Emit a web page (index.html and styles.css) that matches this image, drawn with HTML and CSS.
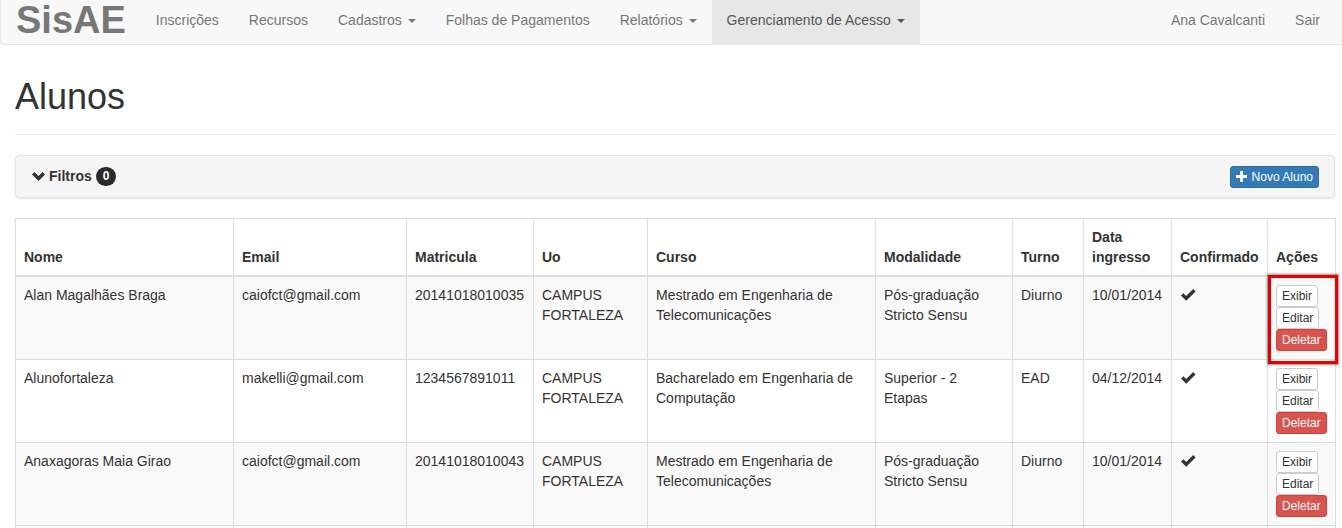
FILE: index.html
```html
<!doctype html>
<html lang="pt-BR">
<head>
  <meta charset="utf-8">
  <meta name="viewport" content="width=device-width,initial-scale=1">
  <title>SisAE - Alunos</title>
  <link rel="stylesheet" href="styles.css">
</head>
<body>
  <nav class="navbar">
    <a class="brand" href="#">SisAE</a>
    <ul class="nav">
      <li><a href="#">Inscrições</a></li>
      <li><a href="#">Recursos</a></li>
      <li><a href="#">Cadastros <span class="caret"></span></a></li>
      <li><a href="#">Folhas de Pagamentos</a></li>
      <li><a href="#">Relatórios <span class="caret"></span></a></li>
      <li class="active"><a href="#">Gerenciamento de Acesso <span class="caret"></span></a></li>
    </ul>
    <ul class="nav nav-right">
      <li><a href="#">Ana Cavalcanti</a></li>
      <li><a href="#">Sair</a></li>
    </ul>
  </nav>

  <div class="container">
    <div class="page-header">
      <h1>Alunos</h1>
    </div>

    <div class="filter-panel">
      <div class="filter-title">
        <svg class="chevron" width="13" height="9" viewBox="0 0 13 9"><polygon points="0,2.4 2.4,0 6.5,4.1 10.6,0 13,2.4 6.5,8.9" fill="#333"/></svg>
        Filtros <span class="badge">0</span>
      </div>
      <a class="btn btn-xs btn-primary" href="#">
        <svg class="plus" width="11" height="11" viewBox="0 0 11 11"><rect x="4" y="0" width="3" height="11" fill="#fff"/><rect x="0" y="4" width="11" height="3" fill="#fff"/></svg>
        Novo Aluno
      </a>
    </div>

    <table class="table">
      <colgroup>
        <col style="width:218px"><col style="width:173px"><col style="width:127px"><col style="width:114px"><col style="width:228px">
        <col style="width:137px"><col style="width:71px"><col style="width:88px"><col style="width:96px"><col style="width:68px">
      </colgroup>
      <thead>
        <tr>
          <th>Nome</th><th>Email</th><th>Matricula</th><th>Uo</th><th>Curso</th>
          <th>Modalidade</th><th>Turno</th><th>Data ingresso</th><th class="nowrap">Confirmado</th><th>Ações</th>
        </tr>
      </thead>
      <tbody>
        <tr>
          <td>Alan Magalhães Braga</td><td>caiofct@gmail.com</td><td>20141018010035</td><td>CAMPUS FORTALEZA</td>
          <td>Mestrado em Engenharia de Telecomunicações</td><td>Pós-graduação Stricto Sensu</td><td>Diurno</td><td>10/01/2014</td>
          <td><svg class="check" width="15" height="12" viewBox="0 0 15 12"><polygon points="0,6.6 2.4,4.2 5.2,7 12.2,0 14.6,2.4 5.2,11.8" fill="#333"/></svg></td>
          <td class="actions">
            <div class="btn-stack">
              <a class="btn btn-xs btn-default" href="#">Exibir</a>
              <a class="btn btn-xs btn-default" href="#">Editar</a>
              <a class="btn btn-xs btn-danger" href="#">Deletar</a>
            </div>
            <span class="mark"></span>
          </td>
        </tr>
        <tr>
          <td>Alunofortaleza</td><td>makelli@gmail.com</td><td>1234567891011</td><td>CAMPUS FORTALEZA</td>
          <td>Bacharelado em Engenharia de Computação</td><td>Superior - 2 Etapas</td><td>EAD</td><td>04/12/2014</td>
          <td><svg class="check" width="15" height="12" viewBox="0 0 15 12"><polygon points="0,6.6 2.4,4.2 5.2,7 12.2,0 14.6,2.4 5.2,11.8" fill="#333"/></svg></td>
          <td class="actions">
            <div class="btn-stack">
              <a class="btn btn-xs btn-default" href="#">Exibir</a>
              <a class="btn btn-xs btn-default" href="#">Editar</a>
              <a class="btn btn-xs btn-danger" href="#">Deletar</a>
            </div>
          </td>
        </tr>
        <tr>
          <td>Anaxagoras Maia Girao</td><td>caiofct@gmail.com</td><td>20141018010043</td><td>CAMPUS FORTALEZA</td>
          <td>Mestrado em Engenharia de Telecomunicações</td><td>Pós-graduação Stricto Sensu</td><td>Diurno</td><td>10/01/2014</td>
          <td><svg class="check" width="15" height="12" viewBox="0 0 15 12"><polygon points="0,6.6 2.4,4.2 5.2,7 12.2,0 14.6,2.4 5.2,11.8" fill="#333"/></svg></td>
          <td class="actions">
            <div class="btn-stack">
              <a class="btn btn-xs btn-default" href="#">Exibir</a>
              <a class="btn btn-xs btn-default" href="#">Editar</a>
              <a class="btn btn-xs btn-danger" href="#">Deletar</a>
            </div>
          </td>
        </tr>
        <tr class="next-row">
          <td></td><td></td><td></td><td></td><td></td><td></td><td></td><td></td><td></td><td></td>
        </tr>
      </tbody>
    </table>
  </div>
</body>
</html>
```

FILE: styles.css
```css
html,body{margin:0;padding:0}
body{height:528px;overflow:hidden;font-family:"Liberation Sans",Arial,Helvetica,sans-serif;font-size:14px;line-height:20px;color:#333;background:#fff}
a{text-decoration:none}

.navbar{display:flex;height:44px;background:#f8f8f8;border-left:1px solid #e7e7e7;border-bottom:1px solid #e7e7e7;border-bottom-left-radius:4px}
.brand{margin-left:15px;padding-right:15px;font-size:38px;font-weight:bold;line-height:40px;color:#777}
.nav{display:flex;list-style:none;margin:0;padding:0}
.nav a{display:block;padding:10px 15px 14px;color:#777}
.nav .active a{background:#e7e7e7;color:#555}
.nav-right{margin-left:auto;margin-right:7px}
.caret{display:inline-block;width:0;height:0;margin-left:2px;vertical-align:middle;border-top:4px solid;border-left:4px solid transparent;border-right:4px solid transparent}

.container{padding:0 7px 0 15px}
.page-header{margin-top:32px;padding-bottom:9px;border-bottom:1px solid #eee}
.page-header h1{margin:0 0 8px;font-size:36px;font-weight:normal;line-height:40px;color:#333}

.filter-panel{display:flex;align-items:center;justify-content:space-between;margin-top:20px;padding:10px 15px 9px 16px;background:#f5f5f5;border:1px solid #e3e3e3;border-radius:4px;box-shadow:0 1px 2px rgba(0,0,0,.12)}
.filter-title{display:flex;align-items:center;margin-top:-2px;font-weight:bold;color:#333}
.chevron{margin-right:4px}
.badge{display:inline-block;margin-left:4px;min-width:6px;padding:3px 7px 4px;font-size:12px;font-weight:bold;line-height:12px;color:#fff;text-align:center;background:#2b2b2b;border-radius:10px}

.btn{display:inline-block;border:1px solid transparent;text-align:center;white-space:nowrap}
.btn-xs{padding:1px 5px;font-size:12px;line-height:18px;border-radius:3px}
.btn-primary{color:#fff;background:#337ab7;border-color:#2e6da4}
.btn-default{color:#333;background:#fff;border-color:#ccc}
.btn-danger{color:#fff;background:#d9534f;border-color:#d43f3a}
.plus{vertical-align:-1px;margin-right:1px}

.table{width:100%;margin-top:20px;border-collapse:collapse;table-layout:fixed;border:1px solid #ddd}
.table th,.table td{padding:8px;border:1px solid #ddd;text-align:left;vertical-align:top}
.table th{vertical-align:bottom;border-bottom:2px solid #ddd;font-weight:bold}
.table .nowrap{white-space:nowrap}
.table tbody tr:nth-child(odd){background:#f9f9f9}
.table .next-row td{height:20px}
.check{vertical-align:-1px;margin-left:1px}

.actions{position:relative}
.btn-stack{display:flex;flex-direction:column;align-items:flex-start}
.mark{position:absolute;top:-2px;left:0;right:-3px;bottom:-5px;border:3px solid #e60000;box-shadow:0 0 2px 1px rgba(0,0,0,.45),inset 0 0 1px rgba(0,0,0,.4)}
```
